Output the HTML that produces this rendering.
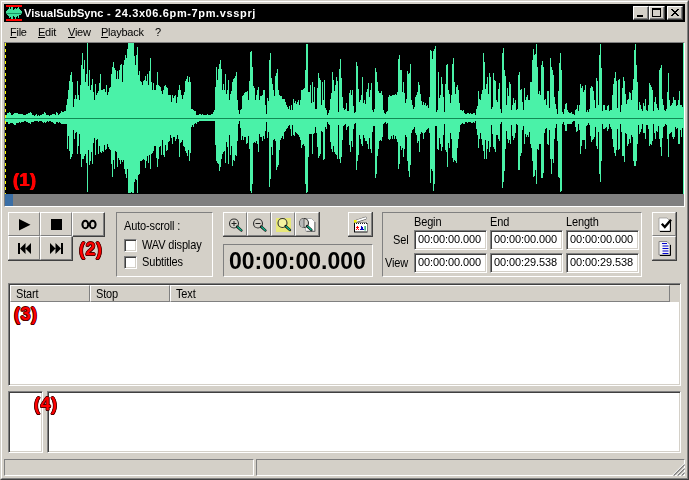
<!DOCTYPE html><html><head><meta charset="utf-8"><title>VisualSubSync</title><style>
html,body{margin:0;padding:0}
body{width:689px;height:480px;overflow:hidden;background:#d4d0c8;position:relative;font-family:"Liberation Sans",sans-serif;font-size:11px;color:#000}
.a{position:absolute;box-sizing:border-box}
.t{position:absolute;white-space:nowrap;line-height:1;will-change:transform}
.btn{position:absolute;box-sizing:border-box;background:#d4d0c8;border:1px solid;border-color:#fff #808080 #808080 #fff}
.btn2{position:absolute;box-sizing:border-box;background:#d4d0c8;border:1px solid;border-color:#fff #404040 #404040 #fff;box-shadow:inset -1px -1px 0 #808080}
.sunk{position:absolute;box-sizing:border-box;background:#fff;border:1px solid;border-color:#808080 #fff #fff #808080;box-shadow:inset 1px 1px 0 #404040, inset -1px -1px 0 #d4d0c8}
.low{position:absolute;box-sizing:border-box;border:1px solid;border-color:#808080 #fff #fff #808080}
.red{position:absolute;white-space:nowrap;line-height:1;font-weight:bold;color:#f00;font-size:18px;letter-spacing:0.5px;text-shadow:0.7px 0 0 #500,-0.7px 0 0 #500,0 0.7px 0 #500,0 -0.7px 0 #500,0.5px 0.5px 0 #500,-0.5px -0.5px 0 #500,0.5px -0.5px 0 #500,-0.5px 0.5px 0 #500}
.lab,.ed{transform:scaleY(1.1);transform-origin:0 0;letter-spacing:-0.15px}
.ed{letter-spacing:-0.1px;transform:scaleY(1.03)}
svg{position:absolute;overflow:visible}
</style></head><body>
<div class="a" style="left:0;top:0;width:689px;height:480px;border:1px solid;border-color:#d4d0c8 #404040 #404040 #d4d0c8"></div>
<div class="a" style="left:1px;top:1px;width:687px;height:478px;border:1px solid;border-color:#fff #808080 #808080 #fff"></div>
<div class="a" style="left:4px;top:4px;width:681px;height:18px;background:#000"></div>
<svg style="left:0;top:0" width="40" height="24" viewBox="0 0 40 24" shape-rendering="crispEdges"><rect x="6" y="5" width="16" height="2" fill="#f00"/><rect x="6" y="19" width="16" height="2" fill="#f00"/><g fill="#3fe09c"><rect x="6" y="11" width="1" height="3"/><rect x="7" y="10" width="1" height="5"/><rect x="8" y="9" width="1" height="7"/><rect x="9" y="7" width="1" height="11"/><rect x="10" y="9" width="1" height="8"/><rect x="11" y="7" width="1" height="12"/><rect x="12" y="7" width="1" height="12"/><rect x="13" y="10" width="1" height="6"/><rect x="14" y="9" width="1" height="8"/><rect x="15" y="8" width="1" height="11"/><rect x="16" y="9" width="1" height="8"/><rect x="17" y="8" width="1" height="8"/><rect x="18" y="7" width="1" height="11"/><rect x="19" y="9" width="1" height="6"/><rect x="20" y="10" width="1" height="5"/><rect x="21" y="11" width="1" height="3"/></g><rect x="6" y="13" width="16" height="1" fill="#1c9060"/></svg>
<div class="t" id="title" style="left:24px;top:8px;color:#fff;font-weight:bold;font-size:11px"><span id="t1">VisualSubSync</span><span id="t2" style="letter-spacing:0.63px"> - 24.3x06.6pm-7pm.vssprj</span></div>
<div class="btn2" style="left:633px;top:6px;width:16px;height:14px"></div>
<div class="btn2" style="left:649px;top:6px;width:16px;height:14px"></div>
<div class="btn2" style="left:667px;top:6px;width:16px;height:14px"></div>
<div class="a" style="left:637px;top:15px;width:6px;height:2px;background:#000"></div>
<div class="a" style="left:652px;top:8px;width:9px;height:9px;border:1px solid #000;border-top-width:2px"></div>
<svg style="left:671px;top:9px" width="8" height="7" viewBox="0 0 8 7" shape-rendering="crispEdges"><path d="M0 0h2v1h1v1h2v-1h1v-1h2v1h-1v1h-1v1h-1v1h1v1h1v1h1v1h-2v-1h-1v-1h-2v1h-1v1h-2v-1h1v-1h1v-1h1v-1h-1v-1h-1v-1h-1z" fill="#000"/></svg>
<div class="t m" style="left:10px;top:27px;font-size:11px;letter-spacing:-0.25px"><u>F</u>ile</div>
<div class="t m" style="left:38px;top:27px;font-size:11px;letter-spacing:-0.25px"><u>E</u>dit</div>
<div class="t m" style="left:68px;top:27px;font-size:11px;letter-spacing:-0.25px"><u>V</u>iew</div>
<div class="t m" style="left:101px;top:27px;font-size:11px;letter-spacing:-0.25px"><u>P</u>layback</div>
<div class="t m" style="left:155px;top:27px;font-size:11px;letter-spacing:-0.25px">?</div>
<div class="a" style="left:4px;top:42px;width:681px;height:165px;border:1px solid;border-color:#808080 #fff #fff #808080"></div>
<div class="a" style="left:5px;top:43px;width:679px;height:151px;background:#000"></div>
<svg style="left:0;top:0" width="689" height="480" viewBox="0 0 689 480" shape-rendering="crispEdges"><path d="M5 119V115h1V115h1V113h1V113h1V112h1V113h1V115h1V115h1V114h1V113h1V113h1V113h1V113h1V114h1V114h1V114h1V114h1V114h1V115h1V115h1V115h1V114h1V114h1V113h1V113h1V112h1V113h1V115h1V115h1V116h1V115h1V114h1V116h1V115h1V116h1V115h1V115h1V114h1V114h1V112h1V113h1V115h1V115h1V115h1V116h1V115h1V115h1V114h1V114h1V114h1V115h1V112h1V113h1V115h1V114h1V113h1V111h1V112h1V112h1V111h1V111h1V105h1V99h1V90h1V81h1V75h1V72h1V82h1V107h1V99h1V95h1V99h1V81h1V95h1V100h1V85h1V65h1V53h1V69h1V60h1V82h1V74h1V43h1V86h1V70h1V90h1V85h1V79h1V92h1V100h1V84h1V95h1V93h1V91h1V83h1V74h1V90h1V90h1V89h1V89h1V92h1V85h1V95h1V92h1V88h1V87h1V74h1V67h1V62h1V68h1V70h1V79h1V71h1V79h1V70h1V65h1V64h1V82h1V65h1V60h1V55h1V58h1V49h1V43h1V43h1V43h1V43h1V43h1V43h1V56h1V65h1V55h1V47h1V75h1V71h1V81h1V82h1V85h1V81h1V80h1V76h1V81h1V74h1V85h1V71h1V58h1V82h1V90h1V83h1V90h1V90h1V85h1V72h1V85h1V86h1V87h1V91h1V94h1V90h1V86h1V85h1V87h1V88h1V95h1V95h1V95h1V102h1V95h1V98h1V96h1V95h1V103h1V97h1V90h1V85h1V90h1V95h1V99h1V95h1V92h1V81h1V79h1V76h1V82h1V77h1V82h1V109h1V109h1V110h1V111h1V111h1V115h1V115h1V115h1V114h1V114h1V115h1V114h1V115h1V115h1V115h1V115h1V114h1V115h1V115h1V115h1V114h1V114h1V112h1V110h1V87h1V67h1V80h1V69h1V64h1V60h1V69h1V90h1V84h1V90h1V74h1V94h1V90h1V80h1V100h1V94h1V91h1V82h1V79h1V78h1V76h1V72h1V100h1V110h1V114h1V110h1V109h1V96h1V95h1V93h1V92h1V92h1V91h1V100h1V81h1V52h1V51h1V67h1V86h1V88h1V100h1V95h1V90h1V87h1V100h1V96h1V96h1V95h1V90h1V90h1V105h1V114h1V98h1V101h1V60h1V53h1V78h1V84h1V90h1V96h1V76h1V73h1V69h1V90h1V95h1V96h1V96h1V99h1V99h1V99h1V102h1V105h1V107h1V109h1V106h1V110h1V105h1V110h1V99h1V103h1V101h1V104h1V102h1V100h1V105h1V100h1V90h1V90h1V89h1V88h1V70h1V44h1V44h1V92h1V92h1V85h1V103h1V82h1V102h1V87h1V109h1V109h1V88h1V73h1V78h1V80h1V105h1V82h1V100h1V80h1V108h1V110h1V115h1V113h1V110h1V99h1V93h1V72h1V80h1V91h1V85h1V77h1V81h1V112h1V69h1V59h1V78h1V97h1V108h1V110h1V109h1V103h1V111h1V111h1V93h1V90h1V95h1V90h1V106h1V113h1V112h1V62h1V66h1V89h1V102h1V100h1V95h1V77h1V103h1V100h1V104h1V92h1V89h1V83h1V97h1V90h1V83h1V110h1V112h1V109h1V68h1V72h1V82h1V91h1V93h1V93h1V91h1V95h1V110h1V113h1V114h1V112h1V111h1V97h1V95h1V96h1V96h1V95h1V95h1V95h1V94h1V95h1V92h1V59h1V55h1V70h1V70h1V92h1V82h1V93h1V103h1V99h1V71h1V74h1V73h1V64h1V100h1V105h1V109h1V107h1V97h1V95h1V92h1V82h1V85h1V94h1V101h1V105h1V102h1V105h1V103h1V106h1V105h1V108h1V97h1V50h1V51h1V59h1V51h1V49h1V46h1V112h1V110h1V72h1V98h1V95h1V77h1V84h1V97h1V112h1V84h1V65h1V64h1V90h1V94h1V103h1V95h1V64h1V58h1V82h1V94h1V87h1V85h1V90h1V103h1V110h1V110h1V111h1V110h1V113h1V114h1V114h1V113h1V113h1V114h1V113h1V114h1V114h1V113h1V113h1V115h1V109h1V106h1V91h1V99h1V100h1V94h1V90h1V53h1V62h1V89h1V84h1V77h1V94h1V73h1V77h1V109h1V107h1V73h1V80h1V81h1V100h1V102h1V89h1V83h1V109h1V113h1V53h1V48h1V70h1V76h1V105h1V88h1V96h1V82h1V84h1V110h1V105h1V98h1V103h1V100h1V110h1V109h1V75h1V72h1V90h1V89h1V102h1V110h1V88h1V100h1V97h1V95h1V100h1V100h1V82h1V82h1V60h1V49h1V55h1V54h1V44h1V67h1V94h1V91h1V95h1V65h1V61h1V67h1V100h1V99h1V105h1V91h1V91h1V108h1V58h1V67h1V70h1V75h1V97h1V104h1V109h1V114h1V91h1V63h1V53h1V70h1V112h1V114h1V109h1V104h1V103h1V110h1V112h1V113h1V113h1V112h1V114h1V114h1V115h1V110h1V109h1V105h1V111h1V105h1V84h1V88h1V86h1V92h1V90h1V85h1V112h1V110h1V112h1V109h1V88h1V86h1V87h1V91h1V100h1V108h1V78h1V81h1V105h1V55h1V44h1V68h1V111h1V105h1V105h1V110h1V110h1V106h1V105h1V111h1V110h1V110h1V95h1V84h1V78h1V72h1V81h1V108h1V80h1V79h1V112h1V105h1V88h1V77h1V81h1V94h1V104h1V100h1V99h1V92h1V93h1V100h1V90h1V79h1V50h1V44h1V65h1V82h1V110h1V102h1V105h1V109h1V111h1V103h1V106h1V99h1V110h1V111h1V105h1V83h1V85h1V87h1V90h1V111h1V102h1V97h1V104h1V108h1V110h1V70h1V68h1V65h1V99h1V105h1V110h1V111h1V109h1V92h1V73h1V100h1V106h1V105h1V103h1V97h1V100h1V100h1V106h1V105h1V100h1V91h1V105h1V105h1V107h1V119ZM5 119V122h1V122h1V122h1V124h1V124h1V123h1V123h1V123h1V124h1V125h1V125h1V123h1V123h1V123h1V122h1V123h1V122h1V122h1V122h1V121h1V121h1V122h1V122h1V123h1V123h1V124h1V122h1V122h1V122h1V121h1V121h1V121h1V121h1V122h1V121h1V121h1V121h1V122h1V123h1V122h1V123h1V122h1V121h1V122h1V121h1V121h1V122h1V122h1V123h1V124h1V124h1V122h1V122h1V123h1V122h1V123h1V124h1V124h1V124h1V124h1V124h1V124h1V149h1V136h1V151h1V159h1V157h1V154h1V130h1V139h1V133h1V132h1V154h1V146h1V134h1V154h1V167h1V159h1V159h1V156h1V154h1V163h1V192h1V150h1V165h1V161h1V152h1V164h1V143h1V138h1V155h1V140h1V139h1V154h1V146h1V152h1V153h1V151h1V152h1V145h1V150h1V149h1V144h1V147h1V149h1V150h1V164h1V177h1V160h1V169h1V151h1V152h1V167h1V158h1V160h1V164h1V160h1V162h1V160h1V169h1V174h1V178h1V169h1V193h1V193h1V193h1V192h1V193h1V193h1V182h1V179h1V180h1V193h1V175h1V174h1V161h1V161h1V160h1V159h1V160h1V168h1V161h1V156h1V163h1V155h1V169h1V154h1V153h1V151h1V146h1V146h1V158h1V167h1V159h1V147h1V146h1V155h1V140h1V155h1V157h1V145h1V151h1V150h1V142h1V141h1V135h1V138h1V144h1V137h1V137h1V141h1V139h1V135h1V139h1V157h1V143h1V142h1V140h1V146h1V147h1V151h1V153h1V156h1V150h1V161h1V153h1V127h1V125h1V127h1V124h1V123h1V124h1V122h1V122h1V121h1V121h1V121h1V121h1V121h1V121h1V121h1V121h1V121h1V121h1V121h1V121h1V121h1V121h1V121h1V121h1V145h1V161h1V163h1V164h1V171h1V167h1V159h1V154h1V152h1V151h1V163h1V142h1V147h1V164h1V135h1V155h1V146h1V166h1V160h1V161h1V155h1V156h1V141h1V124h1V121h1V128h1V140h1V136h1V140h1V137h1V137h1V144h1V143h1V136h1V149h1V191h1V193h1V184h1V143h1V142h1V143h1V141h1V144h1V152h1V134h1V137h1V137h1V141h1V136h1V139h1V131h1V122h1V138h1V132h1V187h1V179h1V147h1V155h1V140h1V139h1V141h1V170h1V167h1V165h1V150h1V140h1V138h1V136h1V139h1V132h1V131h1V129h1V128h1V126h1V125h1V129h1V136h1V125h1V135h1V136h1V132h1V133h1V134h1V135h1V137h1V140h1V148h1V145h1V144h1V146h1V184h1V193h1V192h1V157h1V134h1V134h1V134h1V154h1V134h1V133h1V127h1V133h1V147h1V158h1V156h1V154h1V131h1V132h1V160h1V159h1V127h1V129h1V122h1V124h1V125h1V142h1V149h1V152h1V146h1V152h1V154h1V155h1V159h1V125h1V159h1V163h1V157h1V140h1V126h1V125h1V124h1V130h1V127h1V126h1V145h1V152h1V141h1V147h1V129h1V124h1V123h1V170h1V161h1V155h1V135h1V139h1V144h1V146h1V135h1V138h1V141h1V141h1V144h1V149h1V138h1V149h1V153h1V132h1V126h1V126h1V178h1V174h1V156h1V149h1V141h1V140h1V141h1V137h1V124h1V123h1V122h1V124h1V123h1V139h1V140h1V139h1V136h1V139h1V135h1V139h1V136h1V139h1V142h1V169h1V164h1V146h1V150h1V148h1V157h1V149h1V135h1V137h1V161h1V171h1V177h1V165h1V133h1V130h1V129h1V127h1V133h1V135h1V143h1V141h1V152h1V134h1V132h1V133h1V139h1V133h1V132h1V130h1V129h1V128h1V133h1V183h1V169h1V171h1V191h1V184h1V126h1V126h1V149h1V150h1V138h1V144h1V151h1V147h1V135h1V124h1V150h1V152h1V167h1V143h1V148h1V133h1V139h1V158h1V162h1V160h1V161h1V163h1V148h1V139h1V132h1V125h1V124h1V123h1V124h1V124h1V122h1V122h1V123h1V122h1V122h1V122h1V123h1V123h1V122h1V123h1V121h1V129h1V135h1V148h1V139h1V133h1V139h1V145h1V151h1V159h1V140h1V159h1V149h1V141h1V152h1V147h1V125h1V134h1V147h1V149h1V152h1V135h1V135h1V139h1V141h1V124h1V122h1V188h1V182h1V171h1V149h1V131h1V139h1V143h1V140h1V144h1V125h1V136h1V140h1V138h1V133h1V124h1V125h1V170h1V170h1V156h1V153h1V130h1V126h1V144h1V134h1V137h1V135h1V137h1V132h1V144h1V148h1V161h1V177h1V176h1V170h1V184h1V149h1V150h1V144h1V144h1V178h1V178h1V173h1V133h1V129h1V128h1V144h1V145h1V130h1V159h1V174h1V159h1V163h1V139h1V128h1V124h1V141h1V177h1V178h1V192h1V191h1V124h1V122h1V125h1V131h1V131h1V124h1V124h1V124h1V124h1V124h1V122h1V121h1V121h1V127h1V132h1V131h1V124h1V130h1V154h1V146h1V140h1V140h1V140h1V149h1V126h1V125h1V123h1V125h1V136h1V142h1V140h1V139h1V137h1V127h1V146h1V149h1V132h1V174h1V182h1V161h1V124h1V129h1V129h1V128h1V127h1V131h1V129h1V124h1V127h1V129h1V139h1V147h1V153h1V156h1V150h1V129h1V150h1V149h1V124h1V132h1V156h1V156h1V162h1V133h1V134h1V146h1V144h1V139h1V143h1V135h1V137h1V161h1V166h1V166h1V161h1V144h1V125h1V134h1V132h1V129h1V124h1V133h1V133h1V139h1V125h1V125h1V129h1V146h1V144h1V145h1V141h1V124h1V133h1V139h1V131h1V132h1V126h1V139h1V147h1V156h1V138h1V127h1V126h1V124h1V125h1V139h1V157h1V134h1V133h1V132h1V137h1V139h1V137h1V127h1V129h1V128h1V144h1V144h1V130h1V137h1V128h1V119Z" fill="#4af2a8"/><rect x="5" y="118" width="679" height="1" fill="#128a54"/><rect x="683" y="43" width="1" height="151" fill="#4af2a8"/><path d="M5.5 43V194" stroke="#ff0" stroke-width="1" stroke-dasharray="3 3" fill="none"/></svg>
<div class="a" style="left:5px;top:194px;width:679px;height:12px;background:#808080"></div>
<div class="a" style="left:5px;top:194px;width:8px;height:12px;background:#3a6ea5"></div>
<div class="red" style="left:13px;top:171px;text-shadow:0.5px 0 0 #f00,-0.5px 0 0 #f00,0 0.4px 0 #f00,0 -0.4px 0 #f00">(1)</div>
<div class="btn" style="left:8px;top:212px;width:32px;height:24px"></div>
<div class="btn" style="left:40px;top:212px;width:32px;height:24px"></div>
<div class="btn" style="left:72px;top:212px;width:33px;height:24px"></div>
<div class="btn" style="left:8px;top:236px;width:32px;height:24px"></div>
<div class="btn" style="left:40px;top:236px;width:32px;height:24px"></div>
<div class="a" style="left:72px;top:212px;width:33px;height:25px;border:1px solid;border-color:#fff #404040 #404040 #fff;box-shadow:inset -1px -1px 0 #808080"></div>
<svg style="left:0;top:0" width="689" height="480" viewBox="0 0 689 480"><path d="M19 219v11.500l11.500-5.750z" fill="#000"/><rect x="51" y="219" width="11" height="11" fill="#000"/><path d="M18 243h2v11h-2zM25.500 248.500l5.500-5.500v11zM20 248.500l5.500-5.500v11z" fill="#000"/><path d="M61 243h2v11h-2zM55.500 248.500l-5.500-5.500v11zM61 248.500l-5.500-5.500v11z" fill="#000"/><ellipse cx="85.300" cy="224.500" rx="2.900" ry="3.700" fill="none" stroke="#000" stroke-width="2"/><ellipse cx="92.700" cy="224.500" rx="2.900" ry="3.700" fill="none" stroke="#000" stroke-width="2"/></svg>
<div class="red" style="left:79px;top:240px">(2)</div>
<div class="low" style="left:116px;top:212px;width:97px;height:65px"></div>
<div class="t lab" style="left:124px;top:220px">Auto-scroll :</div>
<div class="sunk" style="left:124px;top:239px;width:13px;height:13px"></div>
<div class="sunk" style="left:124px;top:256px;width:13px;height:13px"></div>
<div class="t lab" style="left:142px;top:239px">WAV display</div>
<div class="t lab" style="left:142px;top:256px">Subtitles</div>
<div class="btn" style="left:223px;top:212px;width:24px;height:24px"></div>
<div class="btn" style="left:247px;top:212px;width:24px;height:24px"></div>
<div class="btn" style="left:271px;top:212px;width:24px;height:24px"></div>
<div class="btn" style="left:295px;top:212px;width:24px;height:24px"></div>
<div class="btn" style="left:348px;top:212px;width:24px;height:24px"></div>
<div class="low" style="left:223px;top:244px;width:150px;height:33px"></div>
<div class="t" id="big" style="left:229px;top:250px;font-weight:bold;font-size:23px">00:00:00.000</div>
<div class="low" style="left:382px;top:212px;width:260px;height:65px"></div>
<div class="t lab" style="left:414px;top:216px">Begin</div>
<div class="t lab" style="left:490px;top:216px">End</div>
<div class="t lab" style="left:566px;top:216px">Length</div>
<div class="t lab" style="left:393px;top:234px">Sel</div>
<div class="t lab" style="left:385px;top:257px">View</div>
<div class="sunk" style="left:414px;top:230px;width:73px;height:20px"></div><div class="t ed" style="left:418px;top:234px">00:00:00.000</div>
<div class="sunk" style="left:490px;top:230px;width:73px;height:20px"></div><div class="t ed" style="left:494px;top:234px">00:00:00.000</div>
<div class="sunk" style="left:566px;top:230px;width:73px;height:20px"></div><div class="t ed" style="left:570px;top:234px">00:00:00.000</div>
<div class="sunk" style="left:414px;top:253px;width:73px;height:20px"></div><div class="t ed" style="left:418px;top:257px">00:00:00.000</div>
<div class="sunk" style="left:490px;top:253px;width:73px;height:20px"></div><div class="t ed" style="left:494px;top:257px">00:00:29.538</div>
<div class="sunk" style="left:566px;top:253px;width:73px;height:20px"></div><div class="t ed" style="left:570px;top:257px">00:00:29.538</div>
<div class="btn" style="left:652px;top:212px;width:24px;height:24px"></div>
<div class="btn" style="left:652px;top:236px;width:24px;height:24px"></div>
<svg style="left:0;top:0" width="689" height="480" viewBox="0 0 689 480" shape-rendering="crispEdges"><path d="M223 236.500h97M319.500 212v25M348 236.500h25M372.500 212v25M8 260.500h65M72.500 237v24M652 260.500h25M676.500 212v49" stroke="#404040" stroke-width="1" fill="none"/></svg>
<svg style="left:0;top:0" width="689" height="480" viewBox="0 0 689 480"><circle cx="234" cy="223.5" r="4.500" fill="#d4d0c8" stroke="#303030" stroke-width="1.100"/><path d="M237.2 226.7l4.100 3.700" stroke="#101010" stroke-width="2.600" stroke-linecap="round" fill="none"/><path d="M237.6 226.9l3.600 3.400" stroke="#10c090" stroke-width="1.300" stroke-linecap="round" fill="none"/><path d="M231.500 223.500h5M234 221v5" stroke="#202020" stroke-width="1" fill="none"/><circle cx="258" cy="223.5" r="4.500" fill="#d4d0c8" stroke="#303030" stroke-width="1.100"/><path d="M261.2 226.7l4.100 3.700" stroke="#101010" stroke-width="2.600" stroke-linecap="round" fill="none"/><path d="M261.6 226.9l3.600 3.400" stroke="#10c090" stroke-width="1.300" stroke-linecap="round" fill="none"/><path d="M255.500 223.500h5" stroke="#202020" stroke-width="1" fill="none"/><rect x="276" y="218" width="15" height="14" fill="#e8e878"/><circle cx="282.5" cy="223" r="4.500" fill="#f4f4a0" stroke="#303030" stroke-width="1.100"/><path d="M285.7 226.2l4.100 3.700" stroke="#101010" stroke-width="2.600" stroke-linecap="round" fill="none"/><path d="M286.1 226.4l3.600 3.400" stroke="#10c090" stroke-width="1.300" stroke-linecap="round" fill="none"/><path d="M305.500 218.500h6l3 3v9.500h-9z" fill="#fff" stroke="#b0b0b0" stroke-width="1"/><path d="M306.500 231.500h8.500v-9.500" stroke="#707070" stroke-width="1" fill="none"/><circle cx="304" cy="223" r="4.500" fill="#d4d0c8" stroke="#303030" stroke-width="1.100"/><path d="M307.2 226.2l4.100 3.700" stroke="#101010" stroke-width="2.600" stroke-linecap="round" fill="none"/><path d="M307.6 226.4l3.600 3.400" stroke="#10c090" stroke-width="1.300" stroke-linecap="round" fill="none"/><path d="M304 218.500a4.500 4.500 0 0 0 0 9z" fill="#b8b8b8"/><path d="M304 219v8" stroke="#606060" stroke-width="1"/><rect x="354" y="222" width="13.500" height="10.500" fill="#fff"/><path d="M354.500 222.500v9.500M354 232h13.500" stroke="#000" stroke-width="1" fill="none"/><path d="M367.500 223v9" stroke="#808080" stroke-width="1" fill="none"/><g shape-rendering="crispEdges" fill="#202020"><rect x="356" y="223" width="1" height="1"/><rect x="358" y="223" width="1" height="1"/><rect x="360" y="223" width="1" height="1"/><rect x="362" y="223" width="1" height="1"/><rect x="364" y="223" width="1" height="1"/><rect x="366" y="223" width="1" height="1"/><rect x="355" y="222" width="12" height="1" fill="#909090"/></g><path d="M356 221.300l9.500-3.100" stroke="#505050" stroke-width="2.800" stroke-linecap="round" fill="none"/><path d="M356 221.200l9.800-3.200" stroke="#fff" stroke-width="1.700" stroke-dasharray="2.500 0.800" stroke-linecap="round" fill="none"/><rect x="354" y="220" width="2.600" height="2.600" fill="#f0f000"/><path d="M357 226h1v1h1v1h-1v1h1v1h-1v-1h-1v1h-1v-1h1v-1h-1v-1h1z" fill="#f00"/><path d="M361 226h1v1h1v2h1v1h-4v-1h1v-2z" fill="#0000c0"/><rect x="364.500" y="226" width="1.200" height="4.500" fill="#00a050"/><path d="M659 218h8l3 3v10h-11z" fill="#fff" stroke="#808080" stroke-width="0.600"/><path d="M660 231.500h10.500v-10" stroke="#000" stroke-width="1" fill="none"/><path d="M661.800 223.800l3 3.200 6.200-7.300" stroke="#000" stroke-width="2.400" fill="none"/><path d="M659 241.500h8l3 3v10.500h-11z" fill="#f4f4f4" stroke="#707070" stroke-width="0.800"/><path d="M660 255.500h10.500v-10.500" stroke="#000" stroke-width="1" fill="none"/><path d="M662 243.500h5M662.500 246h6M662.500 248.500h6M662.500 251h6M662.500 253.500h6" stroke="#0000d0" stroke-width="1.200" fill="none"/></svg>
<div class="sunk" style="left:8px;top:283px;width:673px;height:103px"></div>
<div class="a" style="left:10px;top:285px;width:669px;height:17px;background:#d4d0c8"></div>
<div class="a" style="left:10px;top:285px;width:80px;height:17px;border:1px solid;border-color:#fff #808080 #808080 #fff"></div><div class="t lab" style="left:16px;top:288px">Start</div>
<div class="a" style="left:90px;top:285px;width:80px;height:17px;border:1px solid;border-color:#fff #808080 #808080 #fff"></div><div class="t lab" style="left:96px;top:288px">Stop</div>
<div class="a" style="left:170px;top:285px;width:500px;height:17px;border:1px solid;border-color:#fff #808080 #808080 #fff"></div><div class="t lab" style="left:176px;top:288px">Text</div>
<div class="red" style="left:14px;top:305px">(3)</div>
<div class="sunk" style="left:8px;top:391px;width:35px;height:62px"></div>
<div class="sunk" style="left:47px;top:391px;width:634px;height:62px"></div>
<div class="red" style="left:34px;top:395px">(4)</div>
<div class="low" style="left:4px;top:459px;width:250px;height:17px"></div>
<div class="low" style="left:256px;top:459px;width:429px;height:17px"></div>
<svg style="left:673px;top:464px" width="12" height="12" viewBox="0 0 12 12"><path d="M11.500 0.500L0.500 11.500M11.500 4.500L4.500 11.500M11.500 8.500L8.500 11.500" stroke="#808080" stroke-width="1.600" fill="none"/><path d="M11.500 -0.700L-0.700 11.500M11.500 3.300L3.300 11.500M11.500 7.300L7.300 11.500" stroke="#fff" stroke-width="1" fill="none"/></svg>
</body></html>
